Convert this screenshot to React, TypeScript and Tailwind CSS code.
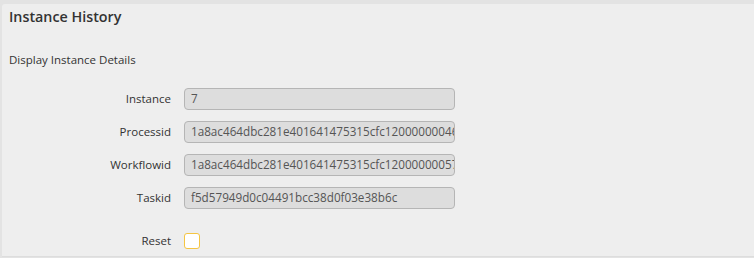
import React from 'react';

const fields = [
  { label: 'Instance', value: '7' },
  { label: 'Processid', value: '1a8ac464dbc281e401641475315cfc12000000046' },
  { label: 'Workflowid', value: '1a8ac464dbc281e401641475315cfc12000000057' },
  { label: 'Taskid', value: 'f5d57949d0c04491bcc38d0f03e38b6c' },
];

export default function App() {
  return (
    <div className="w-[754px] h-[258px] bg-[#e3e3e3] pt-1 pl-0.5 overflow-hidden" style={{ fontFamily: '"Open Sans", sans-serif' }}>
      <div className="h-[253px] bg-[#eeeeee] rounded-tl-[3px] border-b border-[#dddddd]">
        {/* Header */}
        <h2 className="pl-[7px] pt-[3px] text-[14.3px] font-semibold text-[#333] leading-5">Instance History</h2>
        <p className="pl-[7px] mt-[25px] text-[11.5px] text-[#333] leading-4">Display Instance Details</p>

        {/* Fields */}
        <div className="mt-[20px] flex flex-col gap-[11px]">
          {fields.map((f) => (
            <div key={f.label} className="flex items-center">
              <label className="w-[169px] text-right text-[11.5px] text-[#333]">{f.label}</label>
              <div className="ml-[13px] w-[271px] h-[22px] bg-[#dddddd] border border-[#b5b5b5] rounded-[4px] pl-[6px] pr-[3px] flex items-center overflow-hidden">
                <span className="text-[11.7px] text-[#555] whitespace-nowrap">{f.value}</span>
              </div>
            </div>
          ))}
          <div className="flex items-center mt-[12px]">
            <label className="w-[169px] text-right text-[11.5px] text-[#333]">Reset</label>
            <span className="ml-[13px] w-[16px] h-[16px] bg-white border border-[#f5c542] rounded-[3px]" />
          </div>
        </div>
      </div>
    </div>
  );
}
